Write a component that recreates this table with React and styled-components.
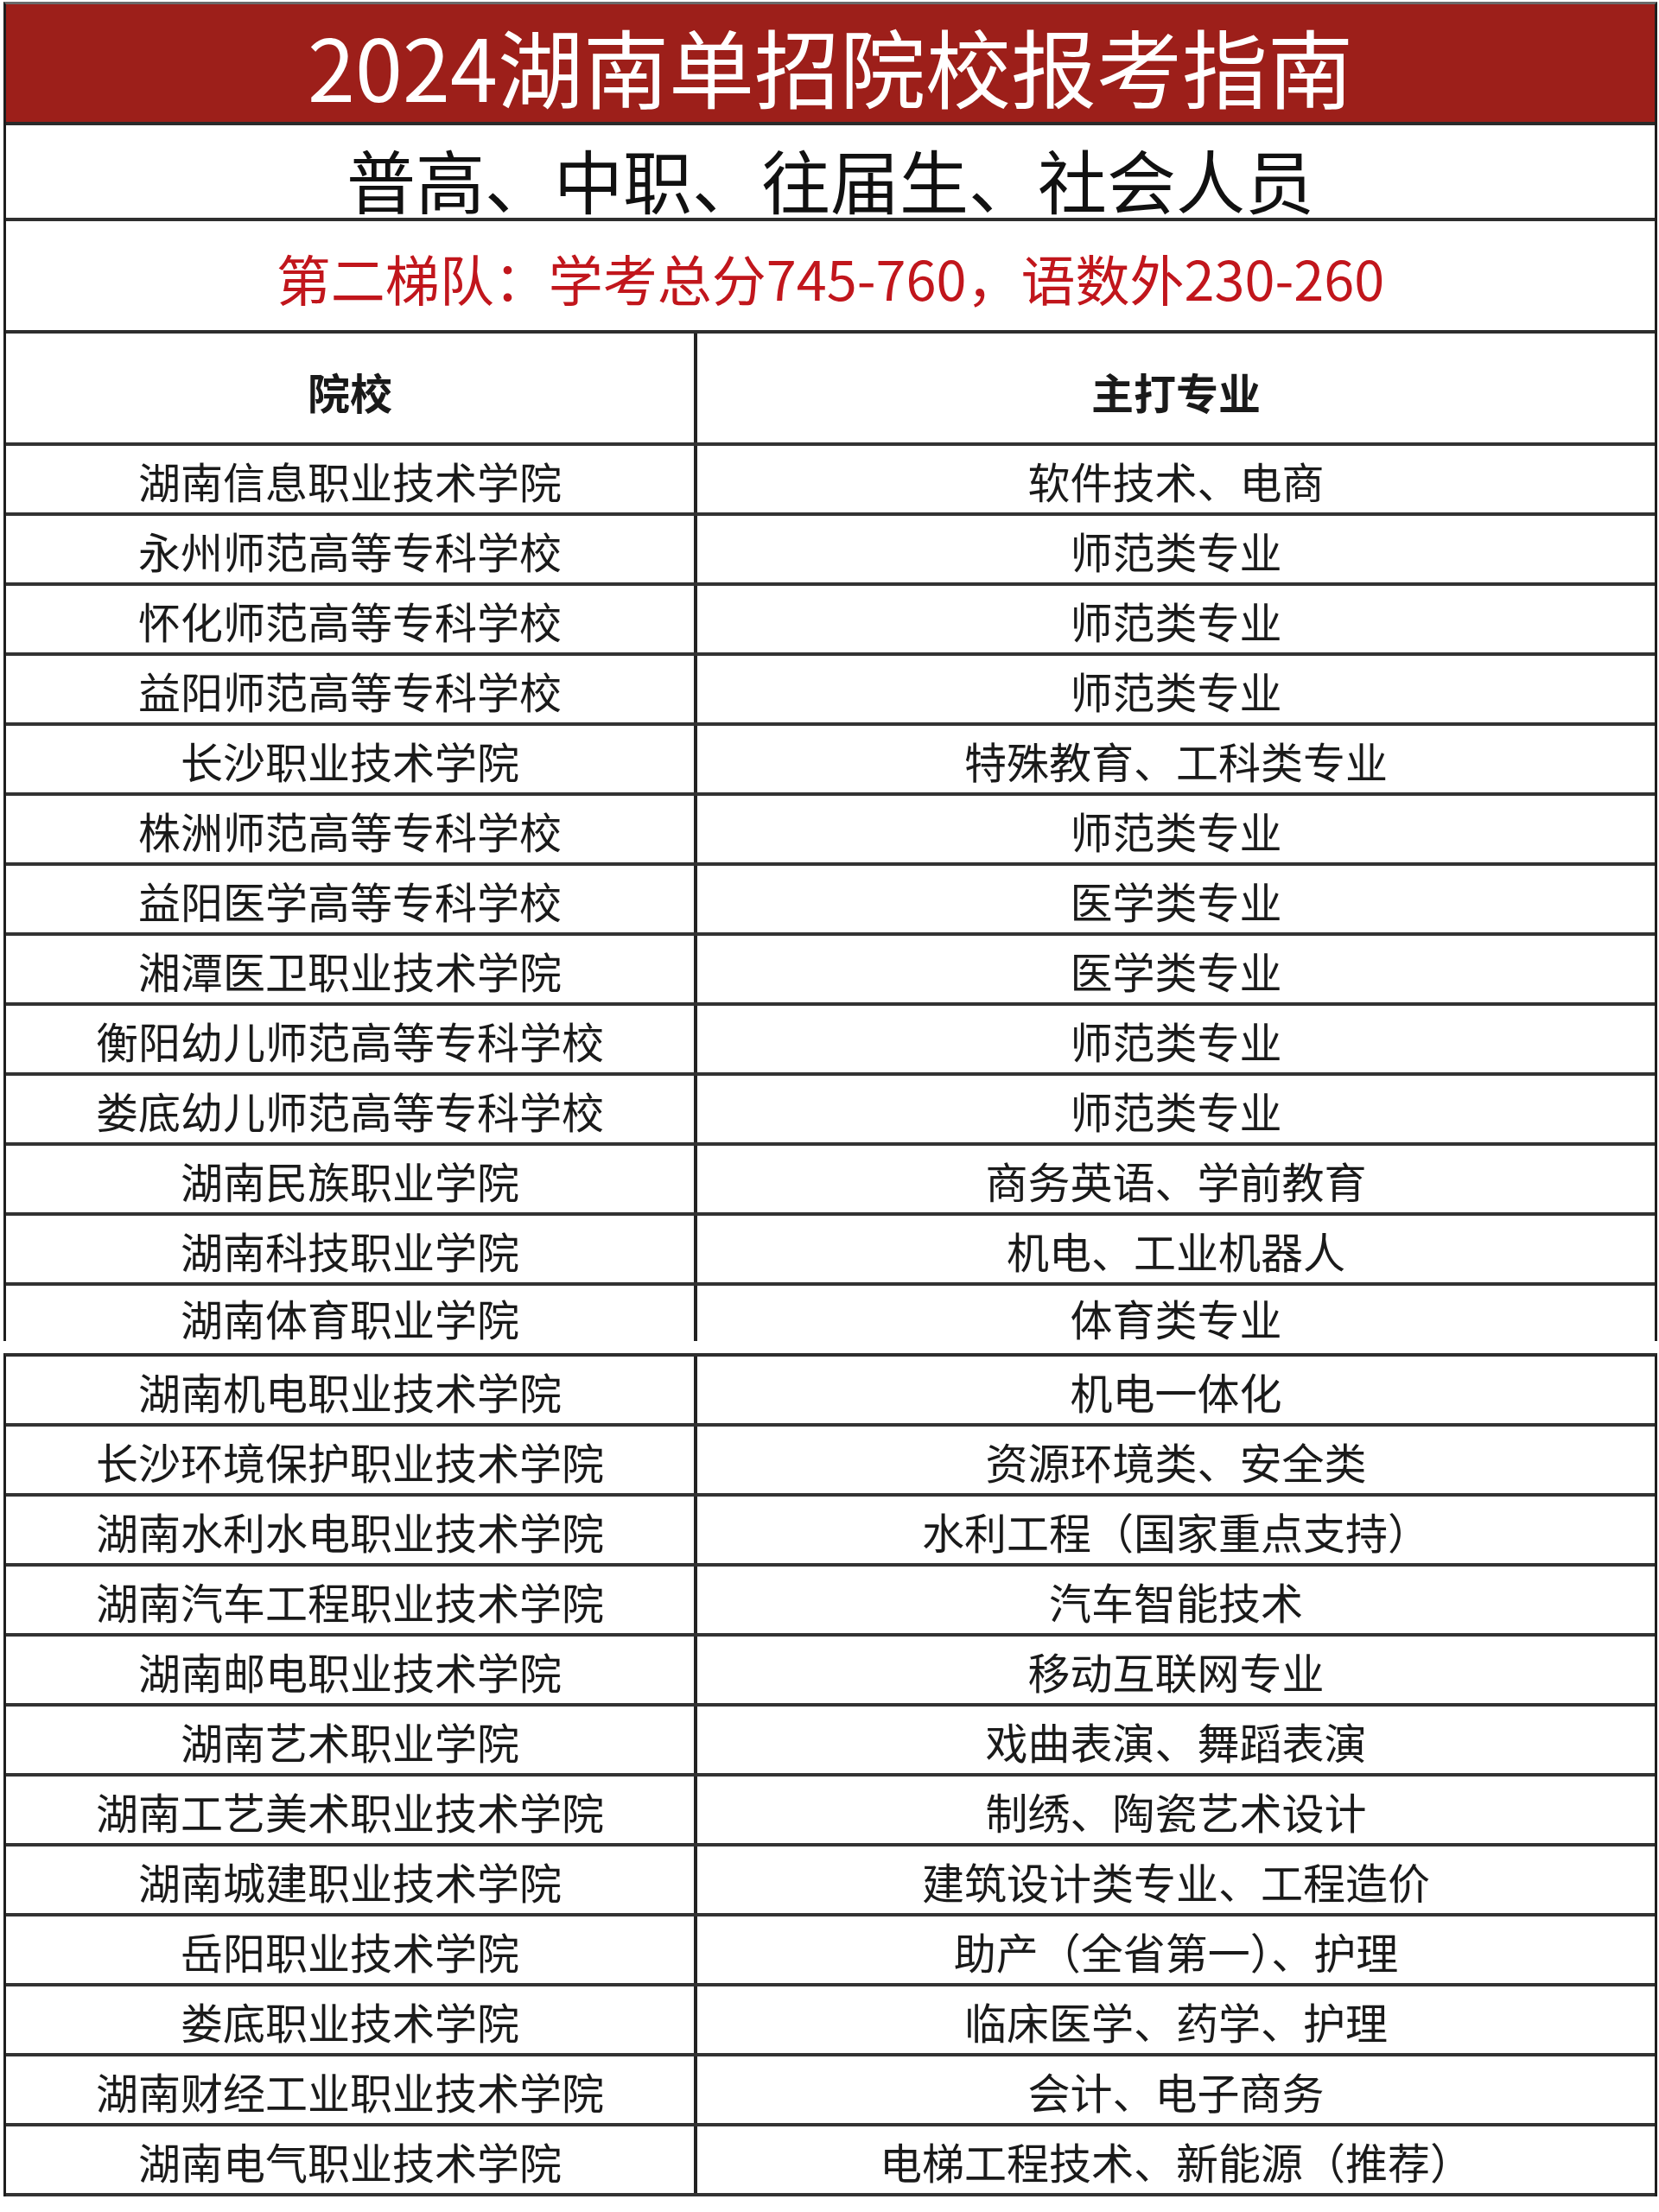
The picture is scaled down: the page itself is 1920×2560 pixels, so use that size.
import React from "react";
import styled, { createGlobalStyle } from "styled-components";

const Global = createGlobalStyle`
  html, body { margin: 0; padding: 0; background: #ffffff; }
  body { font-family: "Noto Sans CJK SC", "Noto Sans", sans-serif; }
`;

const Page = styled.div`
  width: 1920px;
  padding-top: 2px;
  background: #ffffff;
  display: flex;
  flex-direction: column;
  gap: 14px;
`;

const Sheet = styled.div`
  margin-left: 4px;
  width: 1914px;
  box-sizing: border-box;
  border-left: 3px solid #1e1e1e;
  border-right: 3px solid #1e1e1e;
  border-top: ${(p) => (p.$top ? "3px solid #6a6a6a" : "4px solid #2e2e2e")};
  display: flex;
  flex-direction: column;
`;

const Banner = styled.div`
  height: 140px;
  background: #9d1f1a;
  color: #ffffff;
  font-size: 99px;
  line-height: 1;
  display: flex;
  align-items: center;
  justify-content: center;
  padding-top: 4px;
  box-sizing: border-box;
  border-bottom: 4px solid #2a2a2a;
`;

const Audience = styled.div`
  height: 111px;
  box-sizing: border-box;
  border-bottom: 4px solid #2e2e2e;
  display: flex;
  align-items: center;
  justify-content: center;
  padding-top: 14px;
  font-size: 80px;
  line-height: 1;
  color: #111111;
`;

const Tier = styled.div`
  height: 130px;
  box-sizing: border-box;
  border-bottom: 4px solid #2e2e2e;
  display: flex;
  align-items: center;
  justify-content: center;
  padding-top: 2px;
  font-size: 63px;
  line-height: 1;
  color: #c1161c;
`;

const Row = styled.div`
  display: grid;
  grid-template-columns: 800px 1fr;
  height: ${(p) => (p.$clip ? "64px" : p.$head ? "130px" : "81px")};
  box-sizing: border-box;
  border-bottom: ${(p) => (p.$clip ? "none" : "4px solid #333333")};
  overflow: hidden;
  align-items: start;
`;

const Cell = styled.div`
  height: ${(p) => (p.$head ? "126px" : p.$clip ? "64px" : "77px")};
  display: flex;
  align-items: ${(p) => (p.$clip ? "flex-start" : "center")};
  justify-content: center;
  font-size: 49px;
  line-height: 1;
  font-weight: ${(p) => (p.$head ? 700 : 400)};
  color: #1a1a1a;
  white-space: nowrap;
  padding-top: ${(p) => (p.$head ? "6px" : p.$clip ? "12px" : "2px")};
  box-sizing: border-box;
  border-right: ${(p) => (p.$first ? "4px solid #222222" : "none")};
`;

const groupOne = [
  ["湖南信息职业技术学院", "软件技术、电商"],
  ["永州师范高等专科学校", "师范类专业"],
  ["怀化师范高等专科学校", "师范类专业"],
  ["益阳师范高等专科学校", "师范类专业"],
  ["长沙职业技术学院", "特殊教育、工科类专业"],
  ["株洲师范高等专科学校", "师范类专业"],
  ["益阳医学高等专科学校", "医学类专业"],
  ["湘潭医卫职业技术学院", "医学类专业"],
  ["衡阳幼儿师范高等专科学校", "师范类专业"],
  ["娄底幼儿师范高等专科学校", "师范类专业"],
  ["湖南民族职业学院", "商务英语、学前教育"],
  ["湖南科技职业学院", "机电、工业机器人"],
];

const clipped = ["湖南体育职业学院", "体育类专业"];

const groupTwo = [
  ["湖南机电职业技术学院", "机电一体化"],
  ["长沙环境保护职业技术学院", "资源环境类、安全类"],
  ["湖南水利水电职业技术学院", "水利工程（国家重点支持）"],
  ["湖南汽车工程职业技术学院", "汽车智能技术"],
  ["湖南邮电职业技术学院", "移动互联网专业"],
  ["湖南艺术职业学院", "戏曲表演、舞蹈表演"],
  ["湖南工艺美术职业技术学院", "制绣、陶瓷艺术设计"],
  ["湖南城建职业技术学院", "建筑设计类专业、工程造价"],
  ["岳阳职业技术学院", "助产（全省第一）、护理"],
  ["娄底职业技术学院", "临床医学、药学、护理"],
  ["湖南财经工业职业技术学院", "会计、电子商务"],
  ["湖南电气职业技术学院", "电梯工程技术、新能源（推荐）"],
];

function DataRow({ school, major, clip }) {
  return (
    <Row $clip={clip}>
      <Cell $first $clip={clip}>{school}</Cell>
      <Cell $clip={clip}>{major}</Cell>
    </Row>
  );
}

export default function App() {
  return (
    <>
      <Global />
      <Page>
        <Sheet $top>
          <Banner>2024湖南单招院校报考指南</Banner>
          <Audience>普高、中职、往届生、社会人员</Audience>
          <Tier>第二梯队：学考总分745-760，语数外230-260</Tier>
          <Row $head>
            <Cell $head $first>院校</Cell>
            <Cell $head>主打专业</Cell>
          </Row>
          {groupOne.map(([s, m]) => (
            <DataRow key={s} school={s} major={m} />
          ))}
          <DataRow school={clipped[0]} major={clipped[1]} clip />
        </Sheet>
        <Sheet>
          {groupTwo.map(([s, m]) => (
            <DataRow key={s} school={s} major={m} />
          ))}
        </Sheet>
      </Page>
    </>
  );
}
